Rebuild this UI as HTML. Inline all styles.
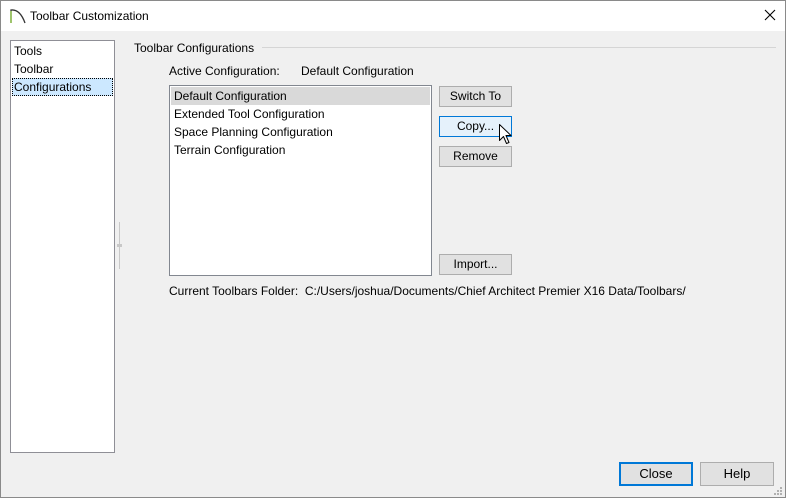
<!DOCTYPE html>
<html><head><meta charset="utf-8"><style>
*{margin:0;padding:0;box-sizing:border-box}
body{width:786px;height:498px;overflow:hidden;background:#f0f0f0;font-family:"Liberation Sans",sans-serif;font-size:12px;color:#000;position:relative}
.frame{position:absolute;left:0;top:0;width:786px;height:498px;border:1px solid #8a8a8a;pointer-events:none}
.title{position:absolute;left:0;top:0;width:786px;height:31px;background:#fff}
.abs{position:absolute;white-space:nowrap}
.btn{position:absolute;background:#e1e1e1;border:1px solid #adadad;text-align:center;line-height:18px}
.lst{position:absolute;background:#fff;border:1px solid #828790}
</style></head><body>
<div class="title">
<svg class="abs" style="left:8px;top:6px" width="18" height="18"><path d="M3 17 V4 Q12 3 17 17" fill="none" stroke="#333" stroke-width="1.3"/><path d="M3 17V5" stroke="#8cc63f" stroke-width="1.3"/></svg>
<div class="abs" style="left:30px;top:9px;font-size:12px">Toolbar Customization</div>
<svg class="abs" style="left:764px;top:9px" width="12" height="12"><path d="M1 1L11 11M11 1L1 11" stroke="#000" stroke-width="1.1"/></svg>
</div>
<div class="lst" style="left:10px;top:40px;width:105px;height:413px;border-color:#8f8f96">
<div class="abs" style="left:3px;top:3px">Tools</div>
<div class="abs" style="left:3px;top:21px">Toolbar</div>
<div class="abs" style="left:1px;top:37px;width:101px;height:18px;background:#cce8ff;border:1px dotted #000"></div>
<div class="abs" style="left:3px;top:39px">Configurations</div>
</div>
<div class="abs" style="left:119px;top:222px;width:1px;height:47px;background:#c8c8c8"></div>
<div class="abs" style="left:117px;top:244px;width:5px;height:3px;background:#c8c8c8"></div>
<div class="abs" style="left:134px;top:41px">Toolbar Configurations</div>
<div class="abs" style="left:262px;top:47px;width:514px;height:1px;background:#d5d5d5"></div>
<div class="abs" style="left:169px;top:64px">Active Configuration:</div>
<div class="abs" style="left:301px;top:64px">Default Configuration</div>
<div class="lst" style="left:169px;top:85px;width:263px;height:191px">
<div class="abs" style="left:1px;top:1px;width:259px;height:18px;background:#d9d9d9"></div>
<div class="abs" style="left:4px;top:3px">Default Configuration</div>
<div class="abs" style="left:4px;top:21px">Extended Tool Configuration</div>
<div class="abs" style="left:4px;top:39px">Space Planning Configuration</div>
<div class="abs" style="left:4px;top:57px">Terrain Configuration</div>
</div>
<div class="btn" style="left:439px;top:86px;width:73px;height:21px">Switch To</div>
<div class="btn" style="left:439px;top:116px;width:73px;height:21px;background:#e5f1fb;border-color:#0078d7">Copy...</div>
<div class="btn" style="left:439px;top:146px;width:73px;height:21px">Remove</div>
<div class="btn" style="left:439px;top:254px;width:73px;height:21px">Import...</div>
<svg class="abs" style="left:499px;top:124px" width="14" height="22"><path d="M0.5 0.5V16.5L4.5 12.5L7.5 19.5L10 18.5L7 11.5H12Z" fill="#fff" stroke="#000" stroke-width="1" stroke-linejoin="round"/></svg>
<div class="abs" style="left:169px;top:284px">Current Toolbars Folder:&nbsp; C:/Users/joshua/Documents/Chief Architect Premier X16 Data/Toolbars/</div>
<div class="btn" style="left:619px;top:462px;width:74px;height:24px;border:2px solid #0078d7;line-height:20px;font-size:13px">Close</div>
<div class="btn" style="left:700px;top:462px;width:74px;height:24px;line-height:22px;font-size:13px">Help</div>
<svg class="abs" style="left:773px;top:486px" width="10" height="10" fill="#b0b0b0"><rect x="7" y="1" width="2" height="2"/><rect x="4" y="4" width="2" height="2"/><rect x="7" y="4" width="2" height="2"/><rect x="1" y="7" width="2" height="2"/><rect x="4" y="7" width="2" height="2"/><rect x="7" y="7" width="2" height="2"/></svg>
<div class="frame"></div>
</body></html>
